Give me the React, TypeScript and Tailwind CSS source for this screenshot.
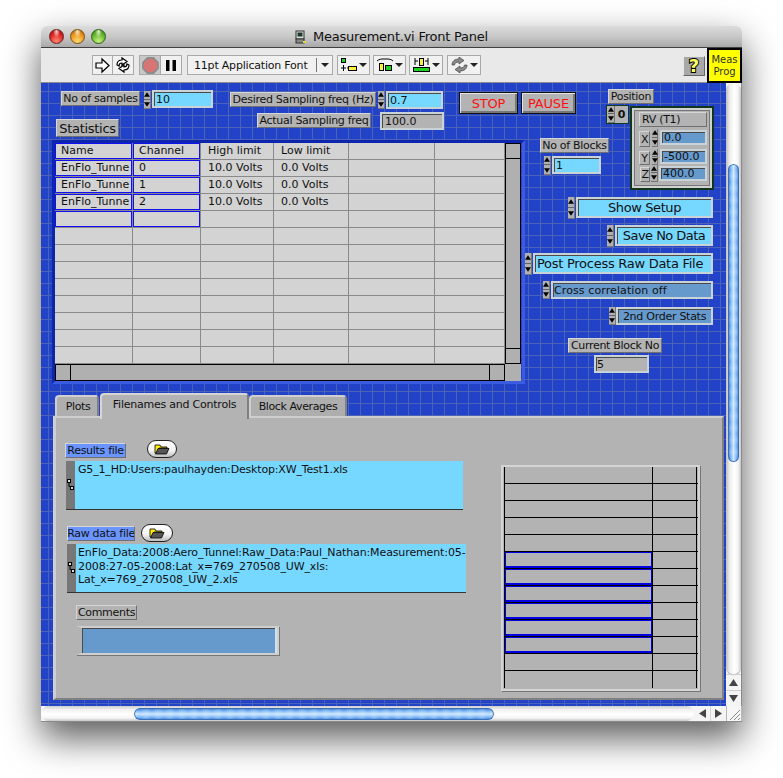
import React from 'react';

type BoxProps = { className: string; children?: React.ReactNode };

const Label = ({ className, children }: BoxProps) => (
  <div className={`absolute flex items-center justify-center whitespace-nowrap overflow-hidden border border-t-[#d6d6d6] border-l-[#d6d6d6] border-r-[#6f6f6f] border-b-[#6f6f6f] bg-[#b3b3b3] text-[11px] leading-none tracking-[-0.3px] text-[#111] ${className}`}>
    {children}
  </div>
);

const Spinner = ({ className }: { className: string }) => (
  <div className={`absolute flex flex-col items-center justify-around bg-[#b0b0b0] border-r border-b border-[#777] ${className}`}>
    <svg width="6" height="5" viewBox="0 0 7 5"><path d="M3.5 0L7 5H0z" fill="#000" /></svg>
    <div className="h-px w-full bg-[#666]" />
    <svg width="6" height="5" viewBox="0 0 7 5"><path d="M0 0h7L3.5 5z" fill="#000" /></svg>
  </div>
);

const Field = ({ className, children }: BoxProps) => (
  <div className={`absolute flex items-center whitespace-nowrap border-2 border-[#c9d2d6] text-[11px] leading-none text-[#111] shadow-[inset_1px_1px_0_#4a4a4a] ${className}`}>
    {children}
  </div>
);

const Ring = ({ className, children }: BoxProps) => (
  <Field className={`bg-[#b3b3b3] ${className}`}>{children}</Field>
);

const ToolBox = ({ className, children }: BoxProps) => (
  <div className={`flex h-[20px] items-center justify-center border border-[#a9a9a9] bg-[#f1f1f1] ${className}`}>
    {children}
  </div>
);

const Caret = () => (
  <svg width="8" height="4" viewBox="0 0 8 4"><path d="M0 0h8L4 4z" fill="#222" /></svg>
);

const Folder = ({ className }: { className: string }) => (
  <div className={`absolute flex items-center justify-center rounded-full border border-[#222] bg-[linear-gradient(180deg,#ffffff,#f3f3f3_60%,#bdbdbd)] ${className}`}>
    <svg width="16" height="11" viewBox="0 0 16 11">
      <path d="M1 1h5l1 2h6v1H5L3 9H1z" fill="#ffee00" stroke="#000" strokeWidth="0.8" />
      <path d="M4 4.5h11L12.5 10H1.5z" fill="#555" stroke="#000" strokeWidth="0.8" />
    </svg>
  </div>
);

const PathGrip = () => (
  <div className="flex w-[9px] items-center justify-center bg-[#777]">
    <svg width="7" height="12" viewBox="0 0 7 12" fill="none" stroke="#000">
      <rect x="0.5" y="0.5" width="3" height="3" fill="#ddd" />
      <rect x="3.5" y="7.5" width="3" height="3" fill="#ddd" />
      <path d="M2 4v3.5h1.5" />
    </svg>
  </div>
);

const columns = ['w-[78px]', 'w-[68px]', 'w-[73px]', 'w-[75px]', 'w-[86px]', 'w-[70px]'];

const tableRows: string[][] = [
  ['Name', 'Channel', 'High limit', 'Low limit', '', ''],
  ['EnFlo_Tunne', '0', '10.0 Volts', '0.0 Volts', '', ''],
  ['EnFlo_Tunne', '1', '10.0 Volts', '0.0 Volts', '', ''],
  ['EnFlo_Tunne', '2', '10.0 Volts', '0.0 Volts', '', ''],
  ['', '', '', '', '', ''],
  ...Array.from({ length: 8 }, () => ['', '', '', '', '', '']),
];

const ChannelTable = () => (
  <div className="absolute left-[11px] top-[57px] flex h-[244px] w-[473px] flex-col border-[3px] border-t-[#0d25ad] border-l-[#0d25ad] border-r-[#3b5be0] border-b-[#3b5be0]">
    <div className="flex h-[221px]">
      <div className="w-[450px] bg-[#d3d3d3]">
        {tableRows.map((row, r) => (
          <div key={r} className="flex h-[17px]">
            {row.map((text, c) => (
              <div key={c} className={`${columns[c]} overflow-hidden border-r border-b border-[#8a8a8a]`}>
                <div className={`flex h-full items-center whitespace-nowrap pb-[2px] text-[11px] leading-none text-[#111] ${c < 2 ? 'pl-[5px]' : 'pl-[7px]'} ${c < 2 && r < 5 ? 'border border-[#1010f0]' : ''}`}>
                  {text}
                </div>
              </div>
            ))}
          </div>
        ))}
      </div>
      <div className="flex w-[16px] flex-col border border-black bg-[#b0b0b0]">
        <div className="h-[15px] border-b border-black" />
        <div className="flex-1" />
        <div className="h-[15px] border-t border-black" />
      </div>
    </div>
    <div className="flex h-[17px]">
      <div className="flex w-[450px] border border-black bg-[#b0b0b0]">
        <div className="w-[15px] border-r border-black" />
        <div className="flex-1" />
        <div className="w-[15px] border-l border-black" />
      </div>
      <div className="w-[16px] bg-[#b0b0b0]" />
    </div>
  </div>
);

const arrayRows = Array.from({ length: 13 }, (_, i) => i);

const ArrayTable = () => (
  <div className="absolute left-[460px] top-[382px] h-[226px] w-[199px] border-2 border-[#d4d4d4] bg-[#b3b3b3] pl-px shadow-[1px_1px_0_#777]">
    {arrayRows.map((i) => (
      <div key={i} className="flex h-[17px] w-[194px] border-b border-black last:border-b-0">
        <div className="w-[149px] border-l border-r border-black">
          {i >= 5 && i <= 10 ? <div className="h-full border border-b-2 border-[#0000e0]" /> : null}
        </div>
        <div className="w-[44px] border-r border-black" />
      </div>
    ))}
  </div>
);

const VerticalScroll = () => (
  <div className="flex w-[16px] flex-col border-r border-[#8a8a8a] bg-[#f4f4f4]">
    <div className="flex h-[592px] flex-col rounded-b-[8px] rounded-t-[8px] bg-[linear-gradient(90deg,#bdbdbd,#eeeeee_25%,#ffffff_55%,#f5f5f5_80%,#c6c6c6)] pt-[81px] shadow-[0_1px_1px_#999]">
      <div className="mx-[2px] h-[298px] rounded-[7px] bg-[repeating-linear-gradient(180deg,rgba(255,255,255,0.2)_0,transparent_6px,rgba(255,255,255,0.2)_12px),linear-gradient(90deg,#2a66c8,#77b4f5_25%,#cfe6ff_50%,#6fb0f5_80%,#2a66c8)] shadow-[inset_0_0_0_1px_#3a6fb8]" />
    </div>
    <div className="flex flex-1 flex-col items-center border-t border-[#cfcfcf]">
      <div className="flex h-[15px] items-center justify-center">
        <svg width="9" height="7" viewBox="0 0 9 7"><path d="M4.5 0L9 7H0z" fill="#444" /></svg>
      </div>
      <div className="h-px w-full bg-[#cfcfcf]" />
      <div className="flex h-[15px] items-center justify-center">
        <svg width="9" height="7" viewBox="0 0 9 7"><path d="M0 0h9L4.5 7z" fill="#444" /></svg>
      </div>
    </div>
  </div>
);

const HorizontalScroll = () => (
  <div className="flex h-[16px] border-b border-[#8a8a8a] bg-[#f4f4f4]">
    <div className="flex h-[15px] w-[653px] items-center rounded-l-[8px] rounded-r-[8px] bg-[linear-gradient(180deg,#cfcfcf,#f2f2f2_25%,#ffffff_55%,#f5f5f5_80%,#c6c6c6)] pl-[93px] pr-[200px]">
      <div className="h-[12px] w-[360px] rounded-[6px] bg-[repeating-linear-gradient(90deg,rgba(255,255,255,0.2)_0,transparent_6px,rgba(255,255,255,0.2)_12px),linear-gradient(180deg,#2a66c8,#77b4f5_25%,#cfe6ff_50%,#6fb0f5_80%,#2a66c8)] shadow-[inset_0_0_0_1px_#3a6fb8]" />
    </div>
    <div className="flex w-[16px] items-center justify-center">
      <svg width="7" height="9" viewBox="0 0 7 9"><path d="M0 4.5L7 0v9z" fill="#444" /></svg>
    </div>
    <div className="flex w-[16px] items-center justify-center border-l border-[#d5d5d5]">
      <svg width="7" height="9" viewBox="0 0 7 9"><path d="M7 4.5L0 0v9z" fill="#444" /></svg>
    </div>
    <div className="flex w-[16px] items-end justify-end border-l border-r border-[#b8b8b8] bg-[#f6f6f6]">
      <svg width="14" height="14" viewBox="0 0 14 14">
        <path d="M3 13L13 3M7 13L13 7M11 13L13 11" stroke="#8a8a8a" strokeWidth="1" fill="none" />
      </svg>
    </div>
  </div>
);

const TitleBar = () => (
  <div className="relative flex h-[22px] shrink-0 items-center justify-center rounded-t-[6px] border-b border-[#404040] bg-[linear-gradient(180deg,#dcdcdc,#c8c8c8_50%,#a9a9a9)]">
    <div className="absolute left-[8px] top-[3px] flex gap-[6px]">
      <div className="h-[15px] w-[15px] rounded-full border border-[#6a2020] bg-[radial-gradient(ellipse_at_50%_12%,#ffd4cc_0%,transparent_38%),radial-gradient(circle_at_50%_85%,#ff8a70,#d81f1f_60%,#8a0f0f)]" />
      <div className="h-[15px] w-[15px] rounded-full border border-[#7a5210] bg-[radial-gradient(ellipse_at_50%_12%,#ffe8c8_0%,transparent_38%),radial-gradient(circle_at_50%_85%,#ffdc70,#e8901c_60%,#95590c)]" />
      <div className="h-[15px] w-[15px] rounded-full border border-[#2f6018] bg-[radial-gradient(ellipse_at_50%_12%,#dcf5c8_0%,transparent_38%),radial-gradient(circle_at_50%_85%,#c8f080,#62b22c_60%,#2f7a10)]" />
    </div>
    <svg className="mr-[6px]" width="12" height="14" viewBox="0 0 12 14">
      <rect x="1" y="1" width="8" height="8" fill="#dcdcdc" stroke="#333" />
      <rect x="2.5" y="2.5" width="5" height="4" fill="#1d3a2a" />
      <rect x="1" y="9" width="8" height="4" fill="#888" stroke="#333" />
      <rect x="8" y="11" width="3" height="2" fill="#e6d73a" />
    </svg>
    <span className="text-[13px] leading-none tracking-[-0.23px] text-[#111]">Measurement.vi Front Panel</span>
  </div>
);

const ToolBar = () => (
  <div className="relative flex h-[35px] shrink-0 border-b border-[#8c8c8c] bg-[#e9e9e9] pl-[51px] pt-[7px]">
    <ToolBox className="w-[21px]">
      <svg width="17" height="17" viewBox="0 0 17 17">
        <path d="M2 6h6V2l7 6.5L8 15v-4H2z" fill="#fff" stroke="#000" strokeWidth="1.2" />
      </svg>
    </ToolBox>
    <ToolBox className="w-[21px] border-l-0">
      <svg width="18" height="18" viewBox="0 0 18 18" fill="none" stroke="#000" strokeWidth="1.2">
        <path d="M3 9c0-3 2-5 5-5V2l5 3.5L8 9V7C6 7 5 8 5 10z" fill="#fff" />
        <path d="M15 9c0 3-2 5-5 5v2l-5-3.5L10 9v2c2 0 3-1 3-3z" fill="#fff" />
      </svg>
    </ToolBox>
    <ToolBox className="ml-[5px] w-[22px] !bg-[#c9c9c9]">
      <svg width="17" height="17" viewBox="0 0 17 17">
        <path d="M5.5 1h6l4.5 4.5v6L11.5 16h-6L1 11.5v-6z" fill="#d87474" stroke="#8c8c8c" strokeWidth="1.8" />
      </svg>
    </ToolBox>
    <ToolBox className="w-[21px] border-l-0">
      <svg width="12" height="13" viewBox="0 0 12 13">
        <rect x="1" y="1" width="3.5" height="11" fill="#000" />
        <rect x="7.5" y="1" width="3.5" height="11" fill="#000" />
      </svg>
    </ToolBox>
    <ToolBox className="ml-[5px] w-[146px] justify-start pl-[6px]">
      <span className="w-[122px] whitespace-nowrap text-[11px] leading-none tracking-[-0.2px] text-[#111]">11pt Application Font</span>
      <div className="h-[14px] w-px bg-[#777]" />
      <div className="ml-[4px] flex"><Caret /></div>
    </ToolBox>
    <ToolBox className="ml-[4px] w-[33px] gap-px">
      <svg width="18" height="16" viewBox="0 0 18 16">
        <rect x="1.5" y="1.5" width="4" height="4" fill="#1fd01f" stroke="#000" />
        <path d="M3.5 8v6M1 11h5M7 11h1" stroke="#000" strokeWidth="1" />
        <rect x="8.5" y="9.5" width="8" height="4" fill="#ffee44" stroke="#000" />
      </svg>
      <Caret />
    </ToolBox>
    <ToolBox className="ml-[3px] w-[33px] gap-px">
      <svg width="18" height="16" viewBox="0 0 18 16">
        <path d="M1 4c2-2 5-2 6-2h4c1 0 4 0 6 2" stroke="#000" fill="none" />
        <rect x="3.5" y="6.5" width="4" height="7" fill="#ffee44" stroke="#000" />
        <rect x="9.5" y="8.5" width="6" height="5" fill="#1fd01f" stroke="#000" />
      </svg>
      <Caret />
    </ToolBox>
    <ToolBox className="ml-[3px] w-[34px] gap-px">
      <svg width="19" height="16" viewBox="0 0 19 16">
        <path d="M3 1v7M16 1v7M3 4h3M13 4h3" stroke="#000" />
        <rect x="7.5" y="1.5" width="4" height="7" fill="#ffee44" stroke="#000" />
        <rect x="1.5" y="10.5" width="16" height="4" fill="#1fd01f" stroke="#000" />
      </svg>
      <Caret />
    </ToolBox>
    <ToolBox className="ml-[4px] w-[34px] gap-px">
      <svg width="19" height="16" viewBox="0 0 19 16" fill="#8a8a8a" stroke="#444" strokeWidth="0.7">
        <path d="M2 8c0-4 3-6 7-6V0l5 3.5L9 7V5C6 5 5 6 4.5 8z" />
        <path d="M17 8c0 4-3 6-7 6v2l-5-3.5L10 9v2c3 0 4-1 4.5-3z" />
      </svg>
      <Caret />
    </ToolBox>
    <div className="ml-[202px] mt-px flex h-[20px] w-[22px] items-center justify-center border border-t-[#e6e6e6] border-l-[#e6e6e6] border-r-[#666] border-b-[#666] bg-[#a8a8a8]">
      <span className="text-[18px] font-bold leading-none text-[#ffff66] [-webkit-text-stroke:2px_#000] [paint-order:stroke_fill]">?</span>
    </div>
    <div className="absolute right-0 top-0 flex h-[35px] w-[35px] flex-col items-center justify-center border-2 border-black bg-[#ffff00] text-[10px] leading-[12px] text-[#333]">
      <span>Meas</span>
      <span>Prog</span>
    </div>
  </div>
);

const Canvas = () => (
  <div className="relative h-[623px] w-[685px] overflow-hidden bg-[#2242c8] bg-[linear-gradient(to_right,#4b62b6_1px,transparent_1px),linear-gradient(to_bottom,#4b62b6_1px,transparent_1px)] bg-[size:12px_12px] bg-[position:7px_8px]">
    <Label className="left-[20px] top-[8px] h-[15px] w-[79px]">No of samples</Label>
    <Spinner className="left-[103px] top-[8px] h-[18px] w-[7px]" />
    <Field className="left-[111px] top-[7px] h-[18px] w-[61px] bg-[#77d8ff] pl-[2px]">10</Field>

    <Label className="left-[15px] top-[36px] h-[18px] w-[63px] text-[13px]">Statistics</Label>

    <Label className="left-[189px] top-[9px] h-[15px] w-[146px]">Desired Sampling freq (Hz)</Label>
    <Spinner className="left-[337px] top-[8px] h-[18px] w-[7px]" />
    <Field className="left-[345px] top-[8px] h-[18px] w-[57px] bg-[#77d8ff] pl-[2px]">0.7</Field>

    <Label className="left-[216px] top-[30px] h-[15px] w-[114px]">Actual Sampling freq</Label>
    <Ring className="left-[339px] top-[29px] h-[18px] w-[64px] pl-[3px]">100.0</Ring>

    <button className="absolute left-[418px] top-[9px] flex h-[22px] w-[59px] items-center justify-center border border-[#111] bg-[#b3b3b3] text-[13px] leading-none tracking-[-0.2px] text-[#ff1010] shadow-[inset_1px_1px_0_#e4e4e4,inset_-2px_-2px_0_#777]">STOP</button>
    <button className="absolute left-[480px] top-[9px] flex h-[22px] w-[55px] items-center justify-center border border-[#111] bg-[#b3b3b3] text-[13px] leading-none tracking-[-0.2px] text-[#ff1010] shadow-[inset_1px_1px_0_#e4e4e4,inset_-2px_-2px_0_#777]">PAUSE</button>

    <Label className="left-[567px] top-[6px] h-[15px] w-[46px]">Position</Label>
    <div className="absolute left-[565px] top-[22px] flex h-[19px] w-[23px] border border-[#0f3a1c] bg-[#b3b3b3]">
      <div className="relative w-[8px]"><Spinner className="left-px top-0 h-[17px] w-[7px]" /></div>
      <div className="flex flex-1 items-center justify-center text-[11px] font-bold leading-none text-[#111]">0</div>
    </div>

    <div className="absolute left-[589px] top-[23px] h-[84px] w-[84px] border-2 border-[#12361c] bg-[#b3b3b3] shadow-[inset_0_0_0_2px_#d2d2d2,inset_0_0_0_3px_#777]">
      <Label className="left-[7px] top-[4px] h-[15px] w-[68px] justify-start pl-[2px]">RV (T1)</Label>
      <Label className="left-[7px] top-[23px] h-[16px] w-[11px]">X</Label>
      <Spinner className="left-[20px] top-[21px] h-[18px] w-[6px]" />
      <Field className="left-[28px] top-[22px] h-[15px] w-[47px] bg-[#6699cc] pl-[2px]">0.0</Field>
      <Label className="left-[7px] top-[43px] h-[14px] w-[11px]">Y</Label>
      <Spinner className="left-[20px] top-[41px] h-[16px] w-[6px]" />
      <Field className="left-[28px] top-[41px] h-[15px] w-[47px] bg-[#6699cc] pl-[2px]">-500.0</Field>
      <Label className="left-[8px] top-[59px] h-[15px] w-[10px]">Z</Label>
      <Spinner className="left-[19px] top-[57px] h-[17px] w-[7px]" />
      <Field className="left-[27px] top-[58px] h-[15px] w-[48px] bg-[#6699cc] pl-[2px]">400.0</Field>
    </div>

    <Label className="left-[499px] top-[55px] h-[15px] w-[69px]">No of Blocks</Label>
    <Spinner className="left-[503px] top-[73px] h-[19px] w-[7px]" />
    <Field className="left-[511px] top-[73px] h-[18px] w-[49px] bg-[#77d8ff] pl-[2px]">1</Field>

    <ChannelTable />

    <Spinner className="left-[527px] top-[114px] h-[22px] w-[7px]" />
    <Field className="left-[535px] top-[114px] h-[21px] w-[137px] justify-center bg-[#77d8ff] text-[13px] tracking-[-0.4px]">Show Setup</Field>
    <Spinner className="left-[566px] top-[142px] h-[22px] w-[7px]" />
    <Field className="left-[574px] top-[142px] h-[21px] w-[98px] justify-center bg-[#77d8ff] text-[13px] tracking-[-0.55px]">Save No Data</Field>
    <Spinner className="left-[484px] top-[170px] h-[22px] w-[7px]" />
    <Field className="left-[492px] top-[170px] h-[21px] w-[180px] bg-[#77d8ff] pl-[2px] text-[13px] tracking-[-0.27px]">Post Process Raw Data File</Field>
    <Spinner className="left-[502px] top-[198px] h-[18px] w-[7px]" />
    <Field className="left-[510px] top-[198px] h-[18px] w-[162px] bg-[#6699cc] pl-[1px] tracking-[0.1px]">Cross correlation off</Field>
    <Spinner className="left-[568px] top-[224px] h-[18px] w-[7px]" />
    <Field className="left-[575px] top-[224px] h-[18px] w-[97px] justify-center bg-[#6699cc] tracking-[-0.27px]">2nd Order Stats</Field>

    <Label className="left-[527px] top-[255px] h-[15px] w-[94px]">Current Block No</Label>
    <Ring className="left-[553px] top-[272px] h-[18px] w-[55px] pl-[1px]">5</Ring>

    <div className="absolute left-[12px] top-[333px] h-[284px] w-[671px] border-t-2 border-l-[3px] border-b-2 border-r-2 border-t-[#cfcfcf] border-l-[#cfcfcf] border-b-[#808080] border-r-[#808080] bg-[#b3b3b3]" />
    <div className="absolute left-[14px] top-[312px] flex h-[21px] w-[44px] items-center justify-center rounded-t-[4px] border-t-2 border-l-2 border-r-2 border-t-[#cfcfcf] border-l-[#cfcfcf] border-r-[#808080] bg-[#aeaeae] pl-[2px] text-[11px] leading-none tracking-[-0.4px] text-[#111]">Plots</div>
    <div className="absolute left-[59px] top-[310px] flex h-[26px] w-[149px] items-start justify-center rounded-t-[4px] border-t-2 border-l-2 border-r-2 border-t-[#d6d6d6] border-l-[#d6d6d6] border-r-[#808080] bg-[#b3b3b3] pt-[4px] text-[11px] leading-none tracking-[-0.23px] text-[#111]">Filenames and Controls</div>
    <div className="absolute left-[208px] top-[312px] flex h-[21px] w-[98px] items-center justify-center rounded-t-[4px] border-t-2 border-l-2 border-r-2 border-t-[#cfcfcf] border-l-[#cfcfcf] border-r-[#808080] bg-[#aeaeae] text-[11px] leading-none tracking-[-0.4px] text-[#111]">Block Averages</div>

    <Label className="left-[24px] top-[360px] h-[15px] w-[61px] !bg-[#6a94ff]">Results file</Label>
    <Folder className="left-[106px] top-[357px] h-[18px] w-[30px]" />
    <div className="absolute left-[25px] top-[378px] flex h-[49px] w-[397px] border-b border-[#333]">
      <PathGrip />
      <div className="flex-1 bg-[#77d8ff] pl-[3px] pt-[2px] text-[11px] leading-[13px] tracking-[-0.17px] text-[#111]">G5_1_HD:Users:paulhayden:Desktop:XW_Test1.xls</div>
    </div>

    <Label className="left-[26px] top-[443px] h-[15px] w-[68px] !bg-[#6a94ff]">Raw data file</Label>
    <Folder className="left-[100px] top-[441px] h-[18px] w-[32px]" />
    <div className="absolute left-[26px] top-[461px] flex h-[49px] w-[399px] border-b border-[#333]">
      <PathGrip />
      <div className="flex-1 whitespace-nowrap bg-[#77d8ff] pl-[2px] pt-[2px] text-[11px] leading-[13.5px] tracking-[-0.12px] text-[#111]">
        <div>EnFlo_Data:2008:Aero_Tunnel:Raw_Data:Paul_Nathan:Measurement:05-</div>
        <div>2008:27-05-2008:Lat_x=769_270508_UW_xls:</div>
        <div>Lat_x=769_270508_UW_2.xls</div>
      </div>
    </div>

    <Label className="left-[35px] top-[522px] h-[15px] w-[61px]">Comments</Label>
    <div className="absolute left-[35px] top-[543px] h-[29px] w-[203px] border-2 border-[#cfcfcf] border-l-[6px] border-l-[#b3b3b3] shadow-[1px_1px_0_#777]">
      <Field className="inset-0 !border-0 !border-r-2 !border-r-[#cfe0ee] bg-[#6699cc]" />
    </div>

    <ArrayTable />
  </div>
);

export default function App() {
  return (
    <div className="h-[778px] w-[783px] overflow-hidden bg-white pl-[41px] pt-[26px] font-['DejaVu_Sans',sans-serif]">
      <div className="flex h-[696px] w-[701px] flex-col rounded-t-[6px] shadow-[0_16px_36px_rgba(0,0,0,0.65)]">
        <TitleBar />
        <ToolBar />
        <div className="flex h-[623px]">
          <Canvas />
          <VerticalScroll />
        </div>
        <HorizontalScroll />
      </div>
    </div>
  );
}
